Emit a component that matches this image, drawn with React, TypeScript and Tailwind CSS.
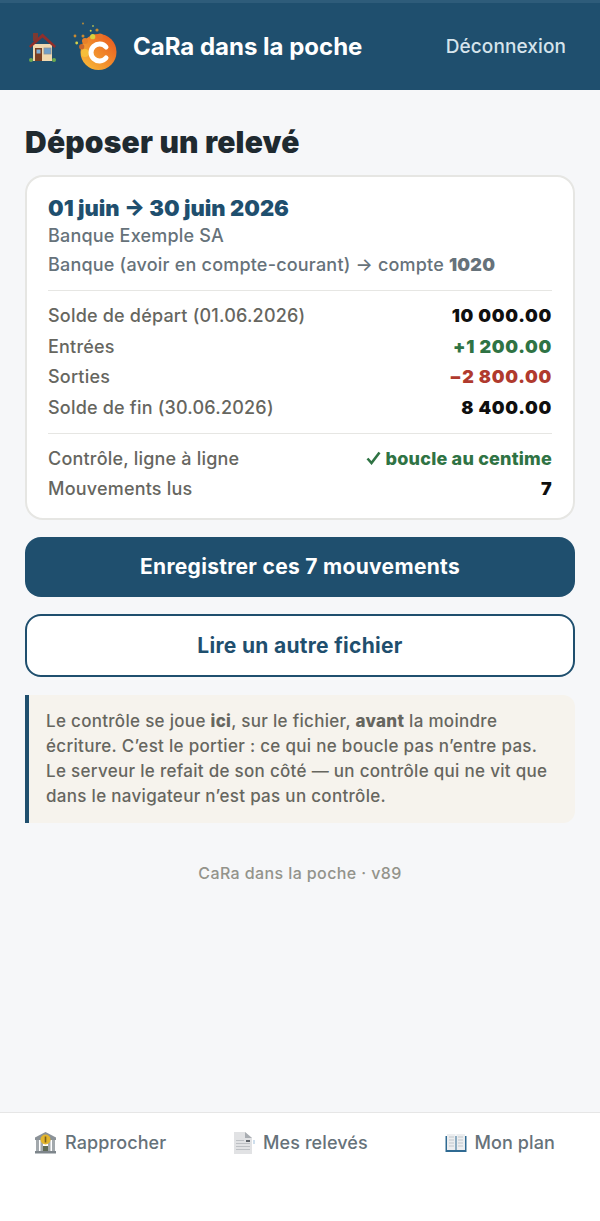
import type { ReactNode } from 'react';

function HouseIcon() {
  return (
    <svg width="30" height="32" viewBox="0 0 30 32">
      <rect x="6" y="2" width="5" height="8" fill="#7d3a32" />
      <rect x="6" y="13" width="19" height="17" fill="#f0d9b0" />
      <path d="M15.5 2.5 L29 15 L27.5 17 L15.5 6.5 L3.5 17 L2 15 Z" fill="#8f2f2c" />
      <rect x="8" y="17" width="7" height="13" fill="#7a3f22" />
      <rect x="9.5" y="18.5" width="4" height="4" fill="#7fb0d6" />
      <rect x="17" y="17" width="7" height="6" fill="#6f9fca" stroke="#8a949c" strokeWidth="0.8" />
      <circle cx="4" cy="29" r="2" fill="#69a84f" />
      <circle cx="27" cy="29" r="2" fill="#69a84f" />
    </svg>
  );
}

function LogoIcon() {
  return (
    <svg width="46" height="50" viewBox="0 0 46 50">
      <defs>
        <linearGradient id="logo" x1="0" y1="1" x2="1" y2="0">
          <stop offset="0" stopColor="#f9c13a" />
          <stop offset="1" stopColor="#e8521d" />
        </linearGradient>
      </defs>
      <circle cx="25.5" cy="30" r="18" fill="url(#logo)" />
      <circle cx="12" cy="19" r="3" fill="#e8812a" />
      <circle cx="27" cy="14.5" r="3" fill="#e8742a" />
      <circle cx="12" cy="31" r="4" fill="#f6bf3a" />
      <circle cx="8.7" cy="24.7" r="2.6" fill="#c9662c" />
      <circle cx="19.7" cy="14.7" r="2.6" fill="#d8d23e" />
      <circle cx="24" cy="8" r="1.6" fill="#c98a30" />
      <circle cx="10" cy="14" r="1.5" fill="#c98a30" />
      <circle cx="2" cy="14" r="1.4" fill="#c98a30" />
      <circle cx="3.7" cy="21" r="1.4" fill="#d7d24a" />
      <circle cx="17.7" cy="8.7" r="1" fill="#d7d24a" />
      <circle cx="20" cy="4" r="1" fill="#9fb05a" />
      <circle cx="10" cy="1.5" r="1" fill="#b58a3a" />
      <path d="M33 25 A8.5 8.5 0 1 0 33 36" fill="none" stroke="#fff" strokeWidth="5" strokeLinecap="round" />
    </svg>
  );
}

function BankIcon() {
  return (
    <svg width="23" height="23" viewBox="0 0 23 23">
      <path d="M11.5 1 L22 6.5 V9 H1 V6.5 Z" fill="#8b9298" />
      <rect x="2" y="9" width="3" height="11" fill="#a3a9ad" />
      <rect x="6.5" y="9" width="2.5" height="11" fill="#a3a9ad" />
      <rect x="14" y="9" width="2.5" height="11" fill="#a3a9ad" />
      <rect x="18" y="9" width="3" height="11" fill="#a3a9ad" />
      <rect x="9" y="15" width="5" height="5" fill="#5f6a55" />
      <rect x="1" y="20" width="21" height="2.5" fill="#7d858b" />
      <circle cx="11.5" cy="8.5" r="5" fill="#e3b52c" />
      <rect x="10.7" y="5.5" width="1.6" height="6" fill="#7a5f1c" />
    </svg>
  );
}

function DocIcon() {
  return (
    <svg width="22" height="24" viewBox="0 0 22 24">
      <path d="M1 1 H12 L19 7 V23 H1 Z" fill="#e1e2e4" />
      <path d="M12 1 L19 7 H12 Z" fill="#a9adb2" />
      <rect x="3" y="9" width="8" height="1" fill="#bdc0c4" />
      <rect x="3" y="12" width="14" height="1" fill="#bdc0c4" />
      <rect x="3" y="15" width="14" height="1" fill="#bdc0c4" />
      <rect x="3" y="18" width="14" height="1" fill="#bdc0c4" />
      <rect x="13" y="9" width="4" height="2" fill="#5f646a" />
      <rect x="20.5" y="9" width="1" height="4" fill="#9fc0dc" />
    </svg>
  );
}

function BookIcon() {
  return (
    <svg width="22" height="20" viewBox="0 0 22 20">
      <path d="M0.5 3 H21.5 V19 H0.5 Z" fill="#2f6a92" />
      <path d="M2 1 H10.5 V17 H2 Z M11.5 1 H20 V17 H11.5 Z" fill="#eceef0" />
      <path d="M4 4 H9 M4 7 H9 M4 10 H9 M4 13 H9 M13 4 H18 M13 7 H18 M13 10 H18 M13 13 H18" stroke="#b9bec3" strokeWidth="0.8" />
    </svg>
  );
}

function CheckIcon() {
  return (
    <svg width="15" height="14" viewBox="0 0 15 14" className="mr-[5px]">
      <path d="M1.5 7.5 L5.5 12 L13.5 1.5" fill="none" stroke="#2f7344" strokeWidth="2.6" />
    </svg>
  );
}

function Row({ label, children }: { label: string; children: ReactNode }) {
  return (
    <div className="flex items-center justify-between h-[30.7px] text-[18px] tracking-[0.2px]">
      <span className="text-[#66665f] font-medium">{label}</span>
      {children}
    </div>
  );
}

function Amount({ value, color }: { value: string; color: string }) {
  return <span className={`font-black tracking-[0.7px] ${color}`}>{value}</span>;
}

function TabItem({ icon, label, className }: { icon: ReactNode; label: string; className?: string }) {
  return (
    <div className={`flex items-center gap-[8px] text-[18px] tracking-[0.1px] font-medium text-[#66727a] ${className ?? ''}`}>
      {icon}
      <span>{label}</span>
    </div>
  );
}

export default function App() {
  return (
    <div className="min-h-[1221px] flex flex-col bg-[#f6f7f9] font-['Inter',sans-serif]">
      <header className="h-[90px] bg-[#1f4f6e] border-t-[3px] border-[#2e5c7a] flex items-center justify-between pl-[27px] pr-[34px]">
        <div className="flex items-center">
          <HouseIcon />
          <div className="ml-[16px]">
            <LogoIcon />
          </div>
          <span className="ml-[14px] mt-[1px] text-[24px] font-bold text-white">CaRa dans la poche</span>
        </div>
        <span className="mt-[2px] text-[19px] tracking-[0.1px] font-medium text-[#d6e4ec]">Déconnexion</span>
      </header>

      <main className="flex-1 px-[25px]">
        <h1 className="mt-[33px] text-[30px] tracking-[0.2px] leading-[38px] font-black text-[#1f2a30]">Déposer un relevé</h1>

        <section className="mt-[14px] h-[345px] bg-white border-2 border-[#e6e6e3] rounded-[18px] px-[21px] pt-[17px]">
          <div className="text-[22px] leading-[29px] font-black text-[#1f4f6e]">01 juin → 30 juin 2026</div>
          <div className="text-[18px] tracking-[0.2px] leading-[26px] font-medium text-[#66727a]">Banque Exemple SA</div>
          <div className="mt-[3px] text-[18px] tracking-[0.2px] leading-[26px] font-medium text-[#66727a]">
            Banque (avoir en compte-courant) → compte <b className="font-black">1020</b>
          </div>
          <div className="mt-[12px] mb-[9px] border-t border-[#e6e6e3]" />
          <Row label="Solde de départ (01.06.2026)">
            <Amount value="10 000.00" color="text-[#0f0f0f]" />
          </Row>
          <Row label="Entrées">
            <Amount value="+1 200.00" color="text-[#2f7344]" />
          </Row>
          <Row label="Sorties">
            <Amount value="−2 800.00" color="text-[#b03a2e]" />
          </Row>
          <Row label="Solde de fin (30.06.2026)">
            <Amount value="8 400.00" color="text-[#0f0f0f]" />
          </Row>
          <div className="mt-[10px] mb-[9px] border-t border-[#e6e6e3]" />
          <Row label="Contrôle, ligne à ligne">
            <span className="flex items-center font-extrabold text-[#2f7344]">
              <CheckIcon />
              boucle au centime
            </span>
          </Row>
          <Row label="Mouvements lus">
            <span className="font-black text-[#0f0f0f]">7</span>
          </Row>
        </section>

        <button className="mt-[17px] w-full h-[60px] rounded-[16px] bg-[#1f4f6e] text-white text-[21px] tracking-[0.3px] font-bold">
          Enregistrer ces 7 mouvements
        </button>
        <button className="mt-[17px] w-full h-[63px] rounded-[16px] bg-white border-2 border-[#1f4f6e] text-[#1f4f6e] text-[21px] tracking-[0.3px] font-bold">
          Lire un autre fichier
        </button>

        <aside className="mt-[18px] h-[128px] bg-[#f6f3ed] border-l-4 border-[#1f4f6e] rounded-r-[12px] pl-[17px] pr-[22px] pt-[14px] text-[17px] tracking-[0.3px] leading-[25px] font-medium text-[#66665f]">
          Le contrôle se joue <b className="font-extrabold">ici</b>, sur le fichier, <b className="font-extrabold">avant</b> la moindre écriture. C’est le portier : ce qui ne boucle pas n’entre pas. Le serveur le refait de son côté — un contrôle qui ne vit que dans le navigateur n’est pas un contrôle.
        </aside>

        <p className="mt-[38px] text-center text-[16px] tracking-[0.4px] font-medium text-[#93938b]">CaRa dans la poche · v89</p>
      </main>

      <nav className="h-[109px] bg-white border-t border-[#e6e6e6] flex justify-between pl-[34px] pr-[45px] pt-[16px] items-start">
        <TabItem icon={<BankIcon />} label="Rapprocher" />
        <TabItem icon={<DocIcon />} label="Mes relevés" className="mr-[10px]" />
        <TabItem icon={<BookIcon />} label="Mon plan" />
      </nav>
    </div>
  );
}
